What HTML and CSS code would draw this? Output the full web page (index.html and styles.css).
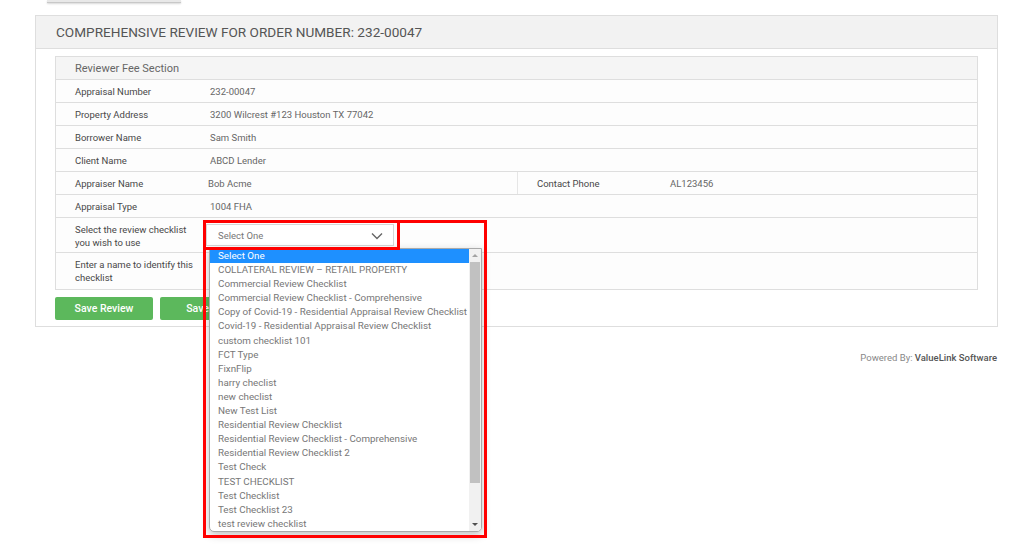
FILE: index.html
```html
<!DOCTYPE HTML><html>
<head>
  <title>Comprehensive Review</title>
  <meta name="viewport" content="width=device-width, initial-scale=1">
  <link rel="stylesheet" href="styles.css">
</head>
<body>
  <div class="topstub"></div>
  <div class="panel">
    <div class="panel-head">
      <h1>Comprehensive Review for Order Number: 232-00047</h1>
    </div>
    <div class="panel-body">
      <div class="table">
        <div class="row head">Reviewer Fee Section</div>
        <div class="row"><span class="lbl">Appraisal Number</span><span class="val">232-00047</span></div>
        <div class="row"><span class="lbl">Property Address</span><span class="val">3200 Wilcrest #123 Houston TX 77042</span></div>
        <div class="row"><span class="lbl">Borrower Name</span><span class="val">Sam Smith</span></div>
        <div class="row"><span class="lbl">Client Name</span><span class="val">ABCD Lender</span></div>
        <div class="row split">
          <span class="lbl">Appraiser Name</span><span class="val tight">Bob Acme</span>
          <span class="lbl bordered">Contact Phone</span><span class="val">AL123456</span>
        </div>
        <div class="row"><span class="lbl">Appraisal Type</span><span class="val">1004 FHA</span></div>
        <div class="row tall">
          <span class="lbl">Select the review checklist<br>you wish to use</span>
          <span class="val">
            <div class="select">
              <span>Select One</span>
              <svg width="12" height="8" viewBox="0 0 12 8"><path d="M1 1.5 L6 6.5 L11 1.5" fill="none" stroke="#666" stroke-width="1.4"/></svg>
            </div>
          </span>
        </div>
        <div class="row tall2">
          <span class="lbl">Enter a name to identify this<br>checklist</span>
          <span class="val"></span>
        </div>
      </div>
      <div class="actions">
        <button class="button">Save Review</button>
        <button class="button">Save and Continue</button>
      </div>
    </div>

    <div class="dropdown">
      <ul class="options">
        <li class="active">Select One</li>
        <li>COLLATERAL REVIEW &ndash; RETAIL PROPERTY</li>
        <li>Commercial Review Checklist</li>
        <li>Commercial Review Checklist - Comprehensive</li>
        <li>Copy of Covid-19 - Residential Appraisal Review Checklist</li>
        <li>Covid-19 - Residential Appraisal Review Checklist</li>
        <li>custom checklist 101</li>
        <li>FCT Type</li>
        <li>FixnFlip</li>
        <li>harry checlist</li>
        <li>new checlist</li>
        <li>New Test List</li>
        <li>Residential Review Checklist</li>
        <li>Residential Review Checklist - Comprehensive</li>
        <li>Residential Review Checklist 2</li>
        <li>Test Check</li>
        <li>TEST CHECKLIST</li>
        <li>Test Checklist</li>
        <li>Test Checklist 23</li>
        <li>test review checklist</li>
      </ul>
      <div class="scrollbar">
        <span class="arrow up"></span>
        <span class="thumb"></span>
        <span class="arrow down"></span>
      </div>
    </div>
    <div class="mark mark-outer"></div>
    <div class="mark mark-select"></div>
  </div>
  <div class="footer">Powered By: <b>ValueLink Software</b></div>
</body>
</html>
```

FILE: styles.css
```css
html {
  font-family: Roboto, "Liberation Sans", Arial, sans-serif;
}
body {
  margin: 0;
  min-height: 553px;
  background: #fff;
  color: #666;
}
.topstub {
  margin-left: 47px;
  width: 134px;
  height: 2px;
  background: #e8e8e8;
  border-bottom: 1px solid #c8c8c8;
  box-shadow: 0 1px 2px rgba(0,0,0,.15);
}
.panel {
  position: relative;
  margin: 12px 0 0 35px;
  width: 961px;
  border: 1px solid #dedede;
  background: #fff;
}
.panel-head {
  background: #f2f2f2;
  border-bottom: 1px solid #dedede;
  height: 32px;
  display: flex;
  align-items: center;
  padding-left: 20px;
}
h1 {
  margin: 0;
  font-size: 13.6px;
  font-weight: 400;
  color: #555;
  text-transform: uppercase;
}
.panel-body {
  padding: 7px 19px 6px 19px;
}
.table {
  border: 1px solid #dedede;
  border-bottom: none;
}
.row {
  display: grid;
  grid-template-columns: 135px 1fr;
  height: 22px;
  align-items: center;
  border-bottom: 1px solid #dedede;
  background: #fdfdfd;
  font-size: 9.5px;
}
.row.head {
  display: flex;
  padding-left: 19px;
  background: #f5f5f5;
  font-size: 11px;
  color: #666;
}
.row.split {
  grid-template-columns: 135px 326px 134px 1fr;
  align-items: stretch;
}
.row.split span {
  display: flex;
  align-items: center;
}
.row.split .bordered {
  border-left: 1px solid #e6e6e6;
}
.row.tall {
  height: 34px;
}
.row.tall2 {
  height: 36px;
}
.lbl {
  padding-left: 19px;
  color: #484848;
  font-weight: 400;
  line-height: 13px;
  white-space: nowrap;
}
.row.tall .lbl {
  padding-top: 1px;
}
.val {
  padding-left: 19px;
  color: #666;
}
.val.tight {
  padding-left: 17px;
}
.row.tall .val {
  padding-left: 15px;
  align-self: start;
  padding-top: 6px;
}
.select {
  width: 188px;
  height: 22px;
  border: 1px solid #d6d6d6;
  background: #fff;
  display: flex;
  align-items: center;
  justify-content: space-between;
  padding: 1px 10px 0 11px;
  box-sizing: border-box;
  font-size: 9.5px;
  color: #777;
}
.actions {
  display: flex;
  gap: 7px;
  padding-top: 7px;
}
.button {
  height: 23px;
  width: 98px;
  padding: 0;
  font-family: inherit;
  font-size: 10.5px;
  font-weight: 500;
  color: #fff;
  background-color: #5cb85c;
  border: none;
  border-radius: 2px;
}
.button + .button {
  width: 140px;
}
.dropdown {
  position: absolute;
  left: 173px;
  top: 232px;
  width: 271px;
  height: 282px;
  background: #fff;
  border: 1px solid #a9a9a9;
  border-radius: 0 0 5px 5px;
  box-shadow: 0 3px 8px rgba(0,0,0,.25);
  display: flex;
  overflow: hidden;
  z-index: 2;
}
.options {
  list-style: none;
  margin: 0;
  padding: 0;
  flex: 1;
  font-size: 9.8px;
  color: #777;
}
.options li {
  height: 14.1px;
  line-height: 14.1px;
  padding-left: 8px;
  white-space: nowrap;
}
.options li.active {
  background: #1e90ff;
  color: #fff;
}
.scrollbar {
  width: 12px;
  background: #f1f1f1;
  display: flex;
  flex-direction: column;
  align-items: center;
}
.arrow {
  width: 0;
  height: 0;
  margin: 5px 0;
  border-left: 3px solid transparent;
  border-right: 3px solid transparent;
}
.arrow.up {
  border-bottom: 3px solid #a3a3a3;
}
.arrow.down {
  border-top: 3px solid #505050;
}
.thumb {
  width: 10px;
  flex: 0 0 221px;
  background: #c1c1c1;
}
.scrollbar .down {
  margin-top: auto;
}
.mark {
  position: absolute;
  border: 3px solid #f00;
  z-index: 3;
}
.mark-outer {
  left: 167px;
  top: 204px;
  width: 278px;
  height: 312px;
}
.mark-select {
  left: 167px;
  top: 204px;
  width: 191px;
  height: 24px;
}
.footer {
  width: 997px;
  text-align: right;
  margin-top: 25px;
  font-size: 9.5px;
  color: #888;
}
.footer b {
  font-weight: 500;
  color: #555;
}
```
